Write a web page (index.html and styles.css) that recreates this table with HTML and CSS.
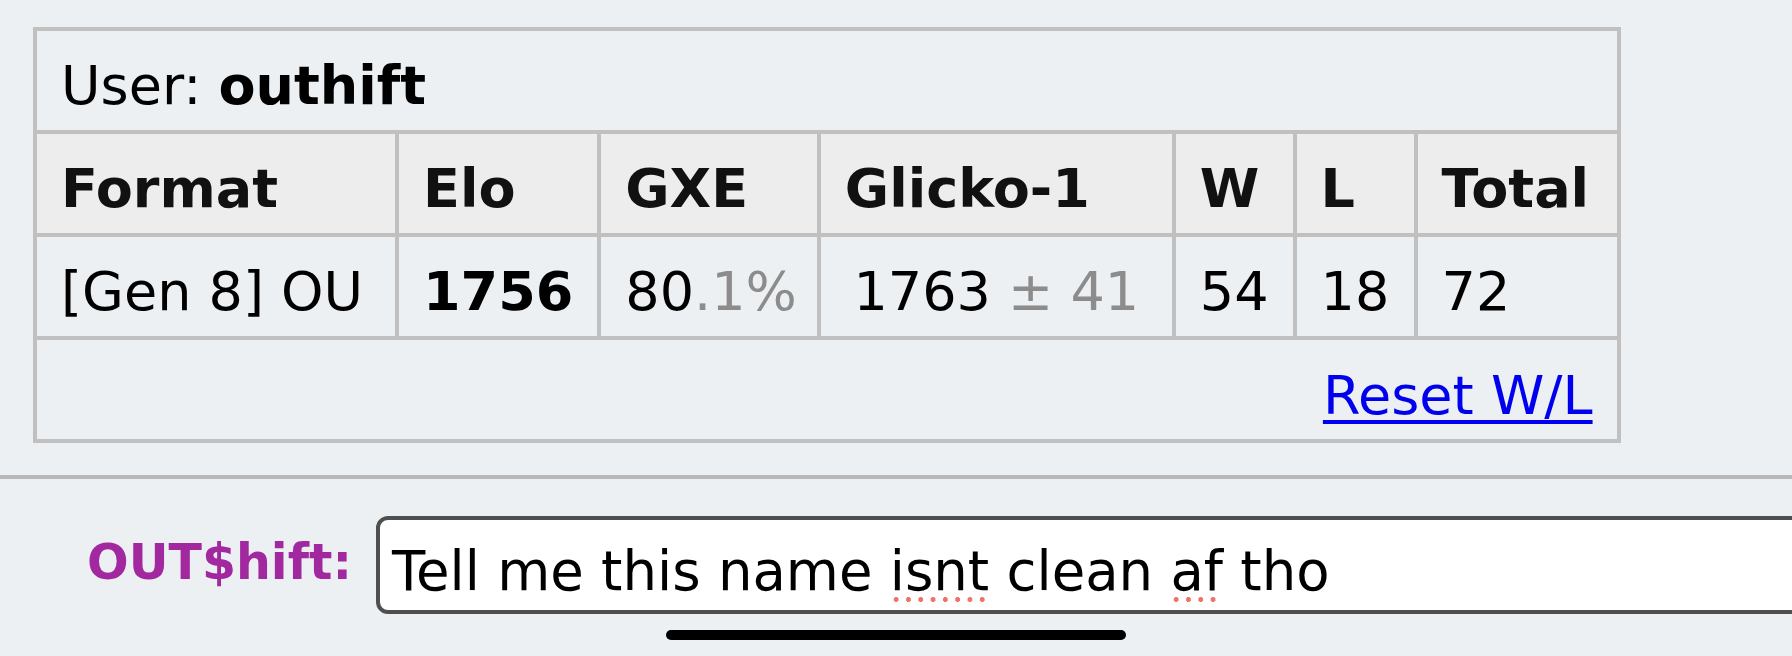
FILE: index.html
```html
<!DOCTYPE html>
<html>
<head>
<meta charset="utf-8">
<link rel="stylesheet" href="styles.css">
</head>
<body>
<div class="log">
  <table class="ladder">
    <tr>
      <td class="user-cell" colspan="7">User: <strong>outhift</strong></td>
    </tr>
    <tr class="head">
      <th class="c-format">Format</th>
      <th class="c-elo">Elo</th>
      <th class="c-gxe">GXE</th>
      <th class="c-glicko">Glicko-1</th>
      <th class="c-w">W</th>
      <th class="c-l">L</th>
      <th class="c-total">Total</th>
    </tr>
    <tr>
      <td>[Gen 8] OU</td>
      <td><strong>1756</strong></td>
      <td class="gxe">80<span class="dim">.1%</span></td>
      <td class="center">1763<span class="dim"> ± 41</span></td>
      <td>54</td>
      <td>18</td>
      <td>72</td>
    </tr>
    <tr>
      <td class="reset-cell" colspan="7"><a href="#" class="reset">Reset W/L</a></td>
    </tr>
  </table>
</div>
<div class="chatbox">
  <div class="chat-label">OUT$hift:</div>
  <div class="chat-input">Tell me this name <span class="typo">isnt</span> clean <span class="typo">af</span> tho</div>
</div>
<div class="home-indicator"></div>
</body>
</html>
```
FILE: styles.css
```css
html, body {
  margin: 0;
  padding: 0;
  width: 1792px;
  height: 656px;
  overflow: hidden;
  background: #ecf0f3;
  font-family: "DejaVu Sans", Verdana, sans-serif;
  color: #000;
}

body {
  position: relative;
}

.log {
  padding: 27px 0 32px 33px;
}

.ladder {
  border-collapse: collapse;
  font-size: 54px;
  line-height: 63px;
  border: 4px solid #c0c0c0;
}

.ladder td,
.ladder th {
  border: 4px solid #c0c0c0;
  padding: 23px 24px 13px 24px;
  text-align: left;
  white-space: nowrap;
}

.ladder th {
  background: #ededed;
  color: #111;
  font-weight: bold;
}

.c-format { width: 310px; }
.c-elo { width: 150px; }
.c-gxe { width: 168px; }
.c-glicko { width: 303px; }
.c-w { width: 65px; }
.c-l { width: 69px; }
.c-total { width: 151px; }

.ladder .c-gxe,
.ladder .gxe {
  padding-right: 20px;
}

.ladder td.center {
  text-align: center;
}

.user-cell strong {
  font-weight: bold;
}

.dim {
  color: #8c8c8c;
}

.ladder td.reset-cell {
  text-align: right;
  padding-top: 24px;
  padding-bottom: 12px;
}

.reset {
  color: #0000ee;
  text-decoration: underline;
  text-decoration-thickness: 4px;
  text-underline-offset: 6px;
}

.chatbox {
  border-top: 4px solid #b9b9b9;
  display: flex;
  align-items: flex-start;
  padding-top: 37px;
}

.chat-label {
  width: 352px;
  flex: none;
  text-align: right;
  font-weight: bold;
  font-size: 49px;
  line-height: 56px;
  color: #a228a0;
  margin-top: 19px;
}

.chat-input {
  flex: none;
  margin-left: 24px;
  width: 1500px;
  height: 98px;
  box-sizing: border-box;
  border: 4px solid #4f4f4f;
  border-radius: 12px;
  background: #fff;
  font-size: 54.5px;
  line-height: 63px;
  padding: 20px 12px 7px 12px;
  white-space: nowrap;
}

.typo {
  position: relative;
}

.typo::after {
  content: "";
  position: absolute;
  left: 0;
  right: 0;
  bottom: 1px;
  height: 5px;
  background-image: radial-gradient(circle, #ee7468 2.2px, transparent 2.7px);
  background-size: 12.3px 5px;
  background-repeat: repeat-x;
}

.home-indicator {
  position: absolute;
  left: 666px;
  top: 630px;
  width: 460px;
  height: 10px;
  border-radius: 5px;
  background: #000;
}
```
